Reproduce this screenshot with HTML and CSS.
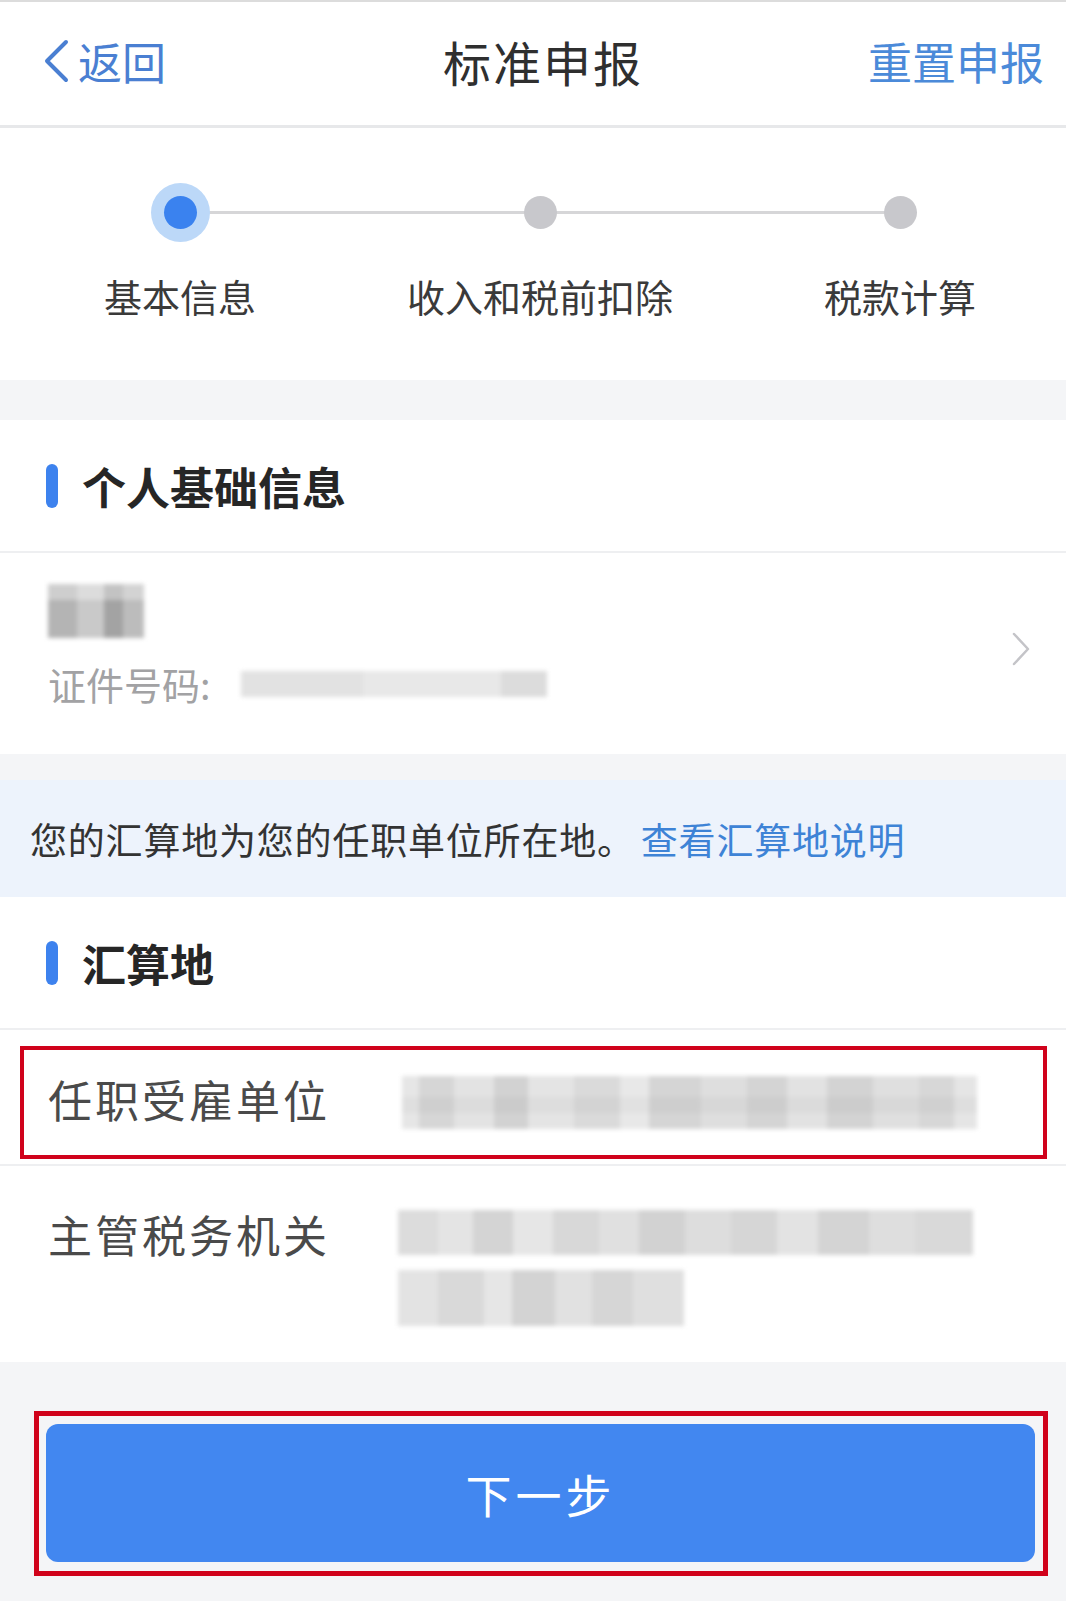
FILE: index.html
```html
<!DOCTYPE html>
<html lang="zh-CN">
<head>
<meta charset="utf-8">
<title>标准申报</title>
<link rel="stylesheet" href="styles.css">
</head>
<body>
<div class="page">
  <header class="nav">
    <div class="nav-back">
      <svg class="back-icon" viewBox="0 0 28 44" width="28" height="44"><polyline points="24,3 5,22 24,41" fill="none" stroke="#4a7fd2" stroke-width="4" stroke-linecap="round" stroke-linejoin="round"/></svg>
      <span>返回</span>
    </div>
    <div class="nav-title">标准申报</div>
    <div class="nav-action">重置申报</div>
  </header>

  <section class="steps">
    <div class="step active"><span class="dot"></span><span class="step-label">基本信息</span></div>
    <div class="step"><span class="dot"></span><span class="step-label">收入和税前扣除</span></div>
    <div class="step"><span class="dot"></span><span class="step-label">税款计算</span></div>
  </section>

  <div class="gap"></div>

  <section class="card">
    <div class="card-title"><span class="bar"></span><h2>个人基础信息</h2></div>
    <div class="person">
      <div class="person-info">
        <div class="mosaic mosaic-name"></div>
        <div class="id-line"><span class="id-label">证件号码:</span><span class="mosaic mosaic-id"></span></div>
      </div>
      <svg class="chevron" viewBox="0 0 20 36" width="20" height="36"><polyline points="3,3 17,18 3,33" fill="none" stroke="#c4c4c8" stroke-width="2.5" stroke-linecap="round" stroke-linejoin="round"/></svg>
    </div>
  </section>

  <div class="gap gap-small"></div>

  <div class="notice">您的汇算地为您的任职单位所在地。<span class="notice-link">查看汇算地说明</span></div>

  <section class="card">
    <div class="card-title"><span class="bar"></span><h2>汇算地</h2></div>
    <div class="field field-marked">
      <div class="mark-box">
        <span class="field-label">任职受雇单位</span>
        <div class="field-value"><div class="mosaic mosaic-v1"></div></div>
      </div>
    </div>
    <div class="field field-tall">
      <span class="field-label">主管税务机关</span>
      <div class="field-value">
        <div class="mosaic mosaic-v2"></div>
        <div class="mosaic mosaic-v3"></div>
      </div>
    </div>
  </section>

  <footer class="footer">
    <div class="btn-mark">
      <button class="btn-next">下一步</button>
    </div>
  </footer>
</div>
</body>
</html>
```

FILE: styles.css
```css
* { box-sizing: border-box; }
html, body { margin: 0; padding: 0; }
body {
  width: 1066px;
  height: 1601px;
  overflow: hidden;
  background: #f4f5f7;
  font-family: "Noto Sans CJK SC", "Noto Sans", sans-serif;
  color: #333;
}
.page { display: flex; flex-direction: column; }

/* nav */
.nav {
  height: 128px;
  background: #fff;
  border-top: 2px solid #dcdcdc;
  border-bottom: 3px solid #e7e8ea;
  display: grid;
  grid-template-columns: 1fr auto 1fr;
  align-items: center;
  padding: 0 22px 5px 42px;
}
.nav-back {
  display: flex;
  align-items: center;
  gap: 8px;
  color: #4a7fd2;
  font-size: 44px;
  line-height: 1;
}
.back-icon { display: block; }
.nav-title {
  font-size: 48px;
  letter-spacing: 2px;
  color: #2f2f2f;
  line-height: 1;
}
.nav-action {
  justify-self: end;
  font-size: 44px;
  color: #4b8ad9;
  line-height: 1;
}

/* steps */
.steps {
  position: relative;
  height: 252px;
  background: #fff;
  display: grid;
  grid-template-columns: repeat(3, 360px);
  overflow: hidden;
}
.steps::before {
  content: "";
  position: absolute;
  left: 180px;
  width: 720px;
  top: 83px;
  height: 3px;
  background: #d6d6d8;
}
.step {
  display: flex;
  flex-direction: column;
  align-items: center;
  padding-top: 68px;
}
.dot {
  position: relative;
  width: 33px;
  height: 33px;
  border-radius: 50%;
  background: #c8c8cc;
}
.step.active .dot {
  background: #3a82ef;
  box-shadow: 0 0 0 13px #bcd8f8;
}
.step-label {
  margin-top: 43px;
  font-size: 38px;
  line-height: 48px;
  color: #3a3a3a;
}

.gap { height: 40px; background: #f4f5f7; }
.gap-small { height: 26px; }

/* card */
.card { background: #fff; }
.card-title {
  height: 133px;
  display: flex;
  align-items: center;
  gap: 24px;
  padding-left: 46px;
  border-bottom: 2px solid #eeeff1;
}
.bar {
  width: 12px;
  height: 44px;
  border-radius: 6px;
  background: #3d82ee;
}
.card-title h2 {
  margin: 0;
  font-size: 44px;
  font-weight: 700;
  color: #262626;
  line-height: 1;
}

.person {
  height: 201px;
  display: flex;
  align-items: center;
  justify-content: space-between;
  padding: 0 35px 16px 48px;
}
.person-info {
  display: flex;
  flex-direction: column;
  gap: 22px;
}
.chevron { display: block; margin-top: 6px; }

.mosaic { filter: blur(2px); }
.mosaic-name {
  width: 96px;
  height: 54px;
  background:
    linear-gradient(180deg, rgba(255,255,255,0.35) 0 30%, transparent 30% 100%),
    linear-gradient(90deg, #b4b4b4 0 30%, #c9c9c9 30% 58%, #a3a3a3 58% 78%, #bcbcbc 78% 100%);
}
.id-line { display: flex; align-items: center; gap: 30px; }
.id-label {
  font-size: 38px;
  line-height: 48px;
  color: #a2a2a4;
}
.mosaic-id {
  display: block;
  width: 306px;
  height: 26px;
  background: linear-gradient(90deg, #e2e2e2 0 40%, #e8e8e8 40% 85%, #dcdcdc 85% 100%);
}

/* notice */
.notice {
  height: 117px;
  background: #edf3fc;
  display: flex;
  align-items: center;
  padding-left: 30px;
  font-size: 37px;
  letter-spacing: 0.8px;
  color: #333;
}
.notice-link { color: #3e83d6; margin-left: 6px; }

/* fields */
.field {
  display: flex;
  border-bottom: 2px solid #eeeff1;
}
.field-marked {
  padding: 16px 19px 5px 20px;
}
.mark-box {
  flex: 1;
  height: 113px;
  border: 4px solid #d0021b;
  display: flex;
  align-items: center;
  padding-left: 24px;
}
.field-label {
  width: 350px;
  flex: none;
  font-size: 44px;
  letter-spacing: 3px;
  line-height: 56px;
  color: #4a4a4a;
}
.mark-box .field-label { width: 354px; margin-top: -8px; }
.field-value { display: flex; flex-direction: column; gap: 15px; }
.mosaic-v1 {
  width: 575px;
  height: 53px;
  background:
    linear-gradient(180deg, transparent 0 40%, rgba(0,0,0,0.03) 40% 70%, transparent 70%),
    linear-gradient(90deg, #e6e6e6 0 3%, #d6d6d6 3% 9%, #e3e3e3 9% 16%, #d2d2d2 16% 22%, #e4e4e4 22% 30%, #dadada 30% 38%, #e8e8e8 38% 43%, #d5d5d5 43% 52%, #dedede 52% 60%, #d4d4d4 60% 67%, #e2e2e2 67% 74%, #d3d3d3 74% 82%, #dfdfdf 82% 90%, #d7d7d7 90% 96%, #e5e5e5 96% 100%);
}
.field-tall {
  padding: 44px 0 36px 48px;
  border-bottom: none;
  align-items: flex-start;
}
.field-tall .field-label { margin-top: -4px; }
.mosaic-v2 {
  width: 575px;
  height: 45px;
  background:
    linear-gradient(90deg, #dcdcdc 0 7%, #e4e4e4 7% 13%, #d4d4d4 13% 20%, #e6e6e6 20% 27%, #d8d8d8 27% 35%, #e0e0e0 35% 42%, #d2d2d2 42% 50%, #dddddd 50% 58%, #d6d6d6 58% 66%, #e3e3e3 66% 73%, #d4d4d4 73% 82%, #dedede 82% 90%, #d9d9d9 90% 100%);
}
.mosaic-v3 {
  width: 286px;
  height: 56px;
  background:
    linear-gradient(90deg, #e3e3e3 0 14%, #d9d9d9 14% 30%, #e6e6e6 30% 40%, #d3d3d3 40% 55%, #e1e1e1 55% 68%, #d6d6d6 68% 82%, #dfdfdf 82% 100%);
}

/* footer */
.footer {
  height: 238px;
  background: #f4f5f7;
  padding-top: 49px;
}
.btn-mark {
  margin-left: 34px;
  width: 1014px;
  height: 165px;
  border: 5px solid #d0021b;
  padding: 8px 8px 9px 7px;
}
.btn-next {
  display: block;
  width: 100%;
  height: 100%;
  border: none;
  border-radius: 12px;
  background: #4287f0;
  color: #fff;
  font-family: "Noto Sans CJK SC", "Noto Sans", sans-serif;
  font-size: 46px;
  letter-spacing: 4px;
  line-height: 1;
  padding: 0;
}
```
